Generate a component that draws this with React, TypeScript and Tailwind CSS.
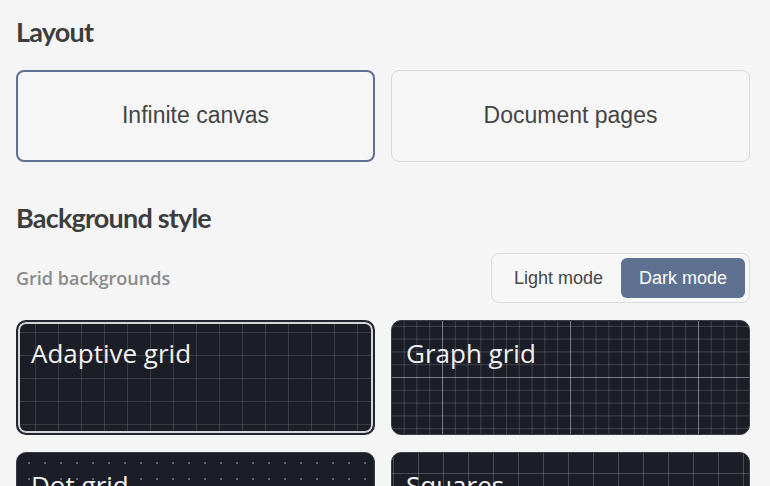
import { useState } from "react";

type GridStyle = {
  id: string;
  label: string;
  pattern: string;
};

const gridStyles: GridStyle[] = [
  {
    id: "adaptive",
    label: "Adaptive grid",
    pattern:
      "bg-[linear-gradient(to_right,rgba(255,255,255,0.13)_1px,transparent_1px),linear-gradient(to_bottom,rgba(255,255,255,0.13)_1px,transparent_1px)] bg-size-[23px_23px] bg-position-[17px_10px]",
  },
  {
    id: "graph",
    label: "Graph grid",
    pattern:
      "bg-[linear-gradient(to_right,rgba(255,255,255,0.3)_1px,transparent_1px),linear-gradient(to_bottom,rgba(255,255,255,0.3)_1px,transparent_1px),linear-gradient(to_right,rgba(255,255,255,0.16)_1px,transparent_1px),linear-gradient(to_bottom,rgba(255,255,255,0.16)_1px,transparent_1px)] bg-size-[128px_128px,128px_128px,12.8px_12.8px,12.8px_12.8px] bg-position-[50px_56px]",
  },
  {
    id: "dots",
    label: "Dot grid",
    pattern:
      "bg-[radial-gradient(circle,rgba(255,255,255,0.32)_1px,transparent_1.5px)] bg-size-[16px_16px] bg-position-[4px_2px]",
  },
  {
    id: "squares",
    label: "Squares",
    pattern:
      "bg-[linear-gradient(to_right,rgba(255,255,255,0.2)_1px,transparent_1px),linear-gradient(to_bottom,rgba(255,255,255,0.2)_1px,transparent_1px)] bg-size-[25px_25px] bg-position-[26px_20px]",
  },
];

function SectionTitle({ children }: { children: string }) {
  return (
    <h2 className="font-['Lato',sans-serif] text-[27px] leading-[36px] font-bold tracking-[-0.8px] text-[#3d3d3d]">
      {children}
    </h2>
  );
}

export default function App() {
  const [layout, setLayout] = useState<"canvas" | "pages">("canvas");
  const [mode, setMode] = useState<"light" | "dark">("dark");
  const [grid, setGrid] = useState("adaptive");

  return (
    <div className="min-h-screen overflow-hidden bg-[#f5f5f5] pt-[14px] pl-4 pr-5">
      <SectionTitle>Layout</SectionTitle>

      <div className="mt-5 grid grid-cols-2 gap-4">
        {[
          { id: "canvas" as const, label: "Infinite canvas" },
          { id: "pages" as const, label: "Document pages" },
        ].map((opt) => (
          <button
            key={opt.id}
            onClick={() => setLayout(opt.id)}
            className={
              layout === opt.id
                ? "flex h-[92px] items-center justify-center rounded-lg border-2 border-[#5f7190] bg-[#f6f6f6] pb-0.5 font-['Liberation_Sans',Arial,sans-serif] text-[23px] text-[#454545]"
                : "flex h-[92px] items-center justify-center rounded-lg border border-[#dadada] bg-[#f6f6f6] pb-0.5 font-['Liberation_Sans',Arial,sans-serif] text-[23px] text-[#454545]"
            }
          >
            {opt.label}
          </button>
        ))}
      </div>

      <div className="mt-[38px]">
        <SectionTitle>Background style</SectionTitle>
      </div>

      <div className="mt-[17px] flex items-center justify-between">
        <span className="font-['Open_Sans',sans-serif] text-[18px] font-semibold text-[#8a8a8a]">
          Grid backgrounds
        </span>
        <div className="flex rounded-lg border border-[#dcdcdc] bg-[#f7f7f7] p-1 font-['Liberation_Sans',Arial,sans-serif] text-[18px]">
          <button
            onClick={() => setMode("light")}
            className={
              mode === "light"
                ? "h-10 rounded-md bg-[#5f7190] px-[18px] text-white"
                : "h-10 rounded-md px-[18px] text-[#454545]"
            }
          >
            Light mode
          </button>
          <button
            onClick={() => setMode("dark")}
            className={
              mode === "dark"
                ? "h-10 rounded-md bg-[#5f7190] px-[18px] text-white"
                : "h-10 rounded-md px-[18px] text-[#454545]"
            }
          >
            Dark mode
          </button>
        </div>
      </div>

      <div className="mt-[17px] grid grid-cols-2 gap-x-4 gap-y-[17px]">
        {gridStyles.map((g) => (
          <button
            key={g.id}
            onClick={() => setGrid(g.id)}
            className={`${
              grid === g.id
                ? "rounded-[10px] border-2 border-[#23262e] px-[13px] pt-[14px] shadow-[inset_0_0_0_2px_#d3d5d9]"
                : "rounded-[10px] border border-[#3a3d46] px-[14px] pt-[15px]"
            } ${g.pattern} flex h-[115px] items-start justify-start bg-[#1b1e27] text-left`}
          >
            <span className="block font-['Open_Sans',sans-serif] text-[26px] leading-[34px] font-medium text-[#f2f2f2]">
              {g.label}
            </span>
          </button>
        ))}
      </div>
    </div>
  );
}
